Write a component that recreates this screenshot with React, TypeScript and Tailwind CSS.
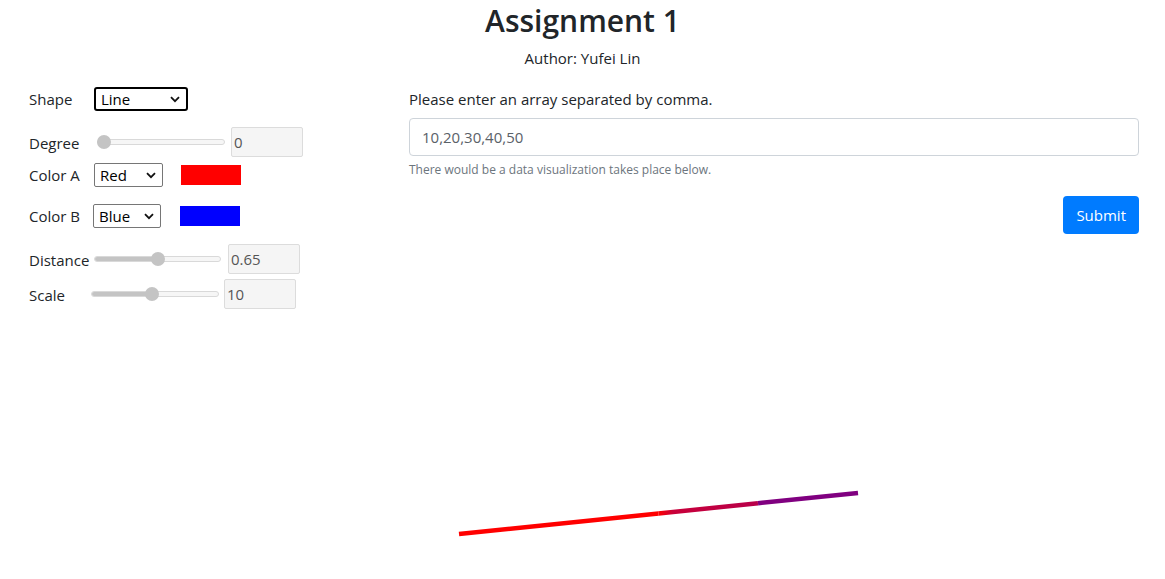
import React from "react"

const font = { fontFamily: '"Open Sans", "Noto Sans", Arial, sans-serif' }

function Chevron() {
  return (
    <svg width="10" height="7" viewBox="0 0 10 7" className="shrink-0">
      <path d="M1 1.2 L5 5.2 L9 1.2" fill="none" stroke="#111" strokeWidth="1.8" />
    </svg>
  )
}

function FakeSelect({ label, width, focused }: { label: string; width: string; focused?: boolean }) {
  return (
    <div
      className={`${width} h-[24px] flex items-center justify-between pl-[5px] pr-[6px] bg-white text-[15px] text-black ${
        focused ? "border-2 border-black rounded-[3px]" : "border border-[#767676] rounded-[2px]"
      }`}
    >
      <span className="leading-none">{label}</span>
      <Chevron />
    </div>
  )
}

function Slider({ width, pct }: { width: string; pct: number }) {
  return (
    <div className={`relative ${width} h-[14px] flex items-center`}>
      <div className="w-full h-[6px] rounded-full border border-[#d9d9d9] bg-[#f6f6f6] overflow-hidden">
        <div className="h-full bg-[#c4c4c4]" style={{ width: `${pct}%` }} />
      </div>
      <div
        className="absolute top-[0px] w-[14px] h-[14px] rounded-full bg-[#c4c4c4]"
        style={{ left: `calc(${pct}% - ${pct === 0 ? 0 : 7}px)` }}
      />
    </div>
  )
}

function ValueBox({ value }: { value: string }) {
  return (
    <div className="w-[72px] h-[30px] border border-[#dcdcdc] bg-[#f5f5f5] rounded-[2px] flex items-center px-[2px] text-[15px] text-[#555]">
      {value}
    </div>
  )
}

export default function App() {
  return (
    <div className="w-[1165px] h-[579px] bg-white text-[#212529] overflow-hidden" style={font}>
      {/* header */}
      <div className="flex flex-col items-center pt-[1px]">
        <h2 className="text-[30px] font-semibold leading-[40px] text-[#212529]">Assignment 1</h2>
        <p className="text-[15px] leading-[22px] mt-[6px]">Author: Yufei Lin</p>
      </div>

      <div className="flex">
        {/* controls */}
        <div className="w-[394px] pl-[29px] pt-[18px] text-[15px]">
          <div className="flex items-center h-[24px]">
            <span className="w-[65px]">Shape</span>
            <FakeSelect label="Line" width="w-[94px]" focused />
          </div>
          <div className="flex items-center h-[30px] mt-[16px]">
            <span className="w-[68px] pt-[2px]">Degree</span>
            <Slider width="w-[128px]" pct={0} />
            <div className="ml-[6px]">
              <ValueBox value="0" />
            </div>
          </div>
          <div className="flex items-center h-[24px] mt-[6px]">
            <span className="w-[65px]">Color A</span>
            <FakeSelect label="Red" width="w-[69px]" />
            <div className="ml-[18px] w-[60px] h-[20px] bg-[#ff0000]" />
          </div>
          <div className="flex items-center h-[24px] mt-[17px]">
            <span className="w-[64px]">Color B</span>
            <FakeSelect label="Blue" width="w-[68px]" />
            <div className="ml-[19px] w-[60px] h-[20px] bg-[#0000ff]" />
          </div>
          <div className="flex items-center h-[30px] mt-[16px]">
            <span className="w-[65px] pt-[2px]">Distance</span>
            <Slider width="w-[127px]" pct={50} />
            <div className="ml-[7px]">
              <ValueBox value="0.65" />
            </div>
          </div>
          <div className="flex items-center h-[30px] mt-[5px]">
            <span className="w-[62px] pt-[2px]">Scale</span>
            <Slider width="w-[128px]" pct={48} />
            <div className="ml-[5px]">
              <ValueBox value="10" />
            </div>
          </div>
        </div>

        {/* array form */}
        <div className="flex-1 pl-[15px] pr-[26px] pt-[18px]">
          <label className="block text-[15px] leading-[24px]">Please enter an array separated by comma.</label>
          <div className="mt-[7px] h-[38px] border border-[#ced4da] rounded-[4px] flex items-center px-[12px] text-[15px] text-[#5a6168]">
            10,20,30,40,50
          </div>
          <p className="mt-[5px] text-[12px] leading-[18px] text-[#6c757d]">
            There would be a data visualization takes place below.
          </p>
          <div className="flex justify-end mt-[17px]">
            <button className="h-[38px] px-[13px] rounded-[4px] bg-[#007bff] text-white text-[15px]">Submit</button>
          </div>
        </div>
      </div>

      {/* visualization */}
      <svg width="1165" height="260" viewBox="0 310 1165 260" className="block mt-[1px]">
        <defs>
          <linearGradient id="mid" x1="658" y1="513" x2="758" y2="503" gradientUnits="userSpaceOnUse">
            <stop offset="0" stopColor="#ff0000" />
            <stop offset="0.15" stopColor="#c8003a" />
            <stop offset="1" stopColor="#b8004a" />
          </linearGradient>
        </defs>
        <line x1="459" y1="534" x2="658.5" y2="513.5" stroke="#ff0000" strokeWidth="4.5" />
        <line x1="658.5" y1="513.5" x2="758" y2="503.2" stroke="url(#mid)" strokeWidth="4.5" />
        <line x1="758" y1="503.2" x2="858" y2="493" stroke="#800080" strokeWidth="4.5" />
      </svg>
    </div>
  )
}
